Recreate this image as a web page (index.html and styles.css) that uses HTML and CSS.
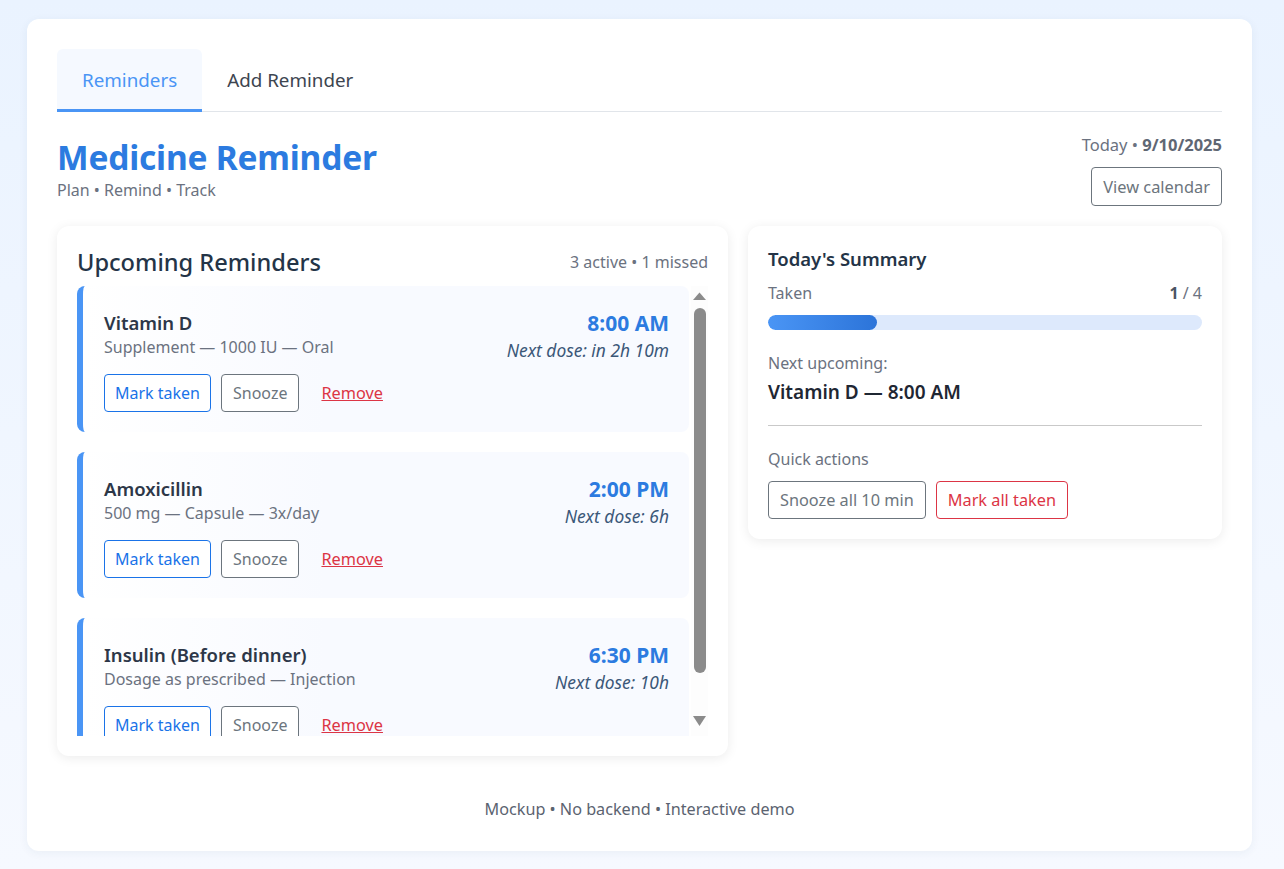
FILE: index.html
```html
<!DOCTYPE html>
<html lang="en">
<head>
<meta charset="utf-8">
<title>Medicine Reminder</title>
<link rel="stylesheet" href="styles.css">
</head>
<body>
<div class="app">
  <nav class="tabs">
    <div class="tab active">Reminders</div>
    <div class="tab">Add Reminder</div>
  </nav>

  <header class="header">
    <div class="brand">
      <h1 class="title">Medicine Reminder</h1>
      <div class="subtitle">Plan • Remind • Track</div>
    </div>
    <div class="header-right">
      <div class="today">Today • <b>9/10/2025</b></div>
      <button class="btn btn-grey btn-cal">View calendar</button>
    </div>
  </header>

  <main class="grid">
    <section class="card card-list">
      <div class="card-head">
        <h2 class="card-title">Upcoming Reminders</h2>
        <div class="muted small">3 active • 1 missed</div>
      </div>
      <div class="list-wrap">
        <div class="list">
          <div class="item">
            <div class="item-main">
              <div class="item-name">Vitamin D</div>
              <div class="item-meta">Supplement — 1000 IU — Oral</div>
              <div class="actions">
                <button class="btn btn-blue">Mark taken</button>
                <button class="btn btn-grey">Snooze</button>
                <a class="link-red" href="#">Remove</a>
              </div>
            </div>
            <div class="item-side">
              <div class="item-time">8:00 AM</div>
              <div class="item-next">Next dose: in 2h 10m</div>
            </div>
          </div>
          <div class="item">
            <div class="item-main">
              <div class="item-name">Amoxicillin</div>
              <div class="item-meta">500 mg — Capsule — 3x/day</div>
              <div class="actions">
                <button class="btn btn-blue">Mark taken</button>
                <button class="btn btn-grey">Snooze</button>
                <a class="link-red" href="#">Remove</a>
              </div>
            </div>
            <div class="item-side">
              <div class="item-time">2:00 PM</div>
              <div class="item-next">Next dose: 6h</div>
            </div>
          </div>
          <div class="item">
            <div class="item-main">
              <div class="item-name">Insulin (Before dinner)</div>
              <div class="item-meta">Dosage as prescribed — Injection</div>
              <div class="actions">
                <button class="btn btn-blue">Mark taken</button>
                <button class="btn btn-grey">Snooze</button>
                <a class="link-red" href="#">Remove</a>
              </div>
            </div>
            <div class="item-side">
              <div class="item-time">6:30 PM</div>
              <div class="item-next">Next dose: 10h</div>
            </div>
          </div>
        </div>
        <div class="scrollbar" aria-hidden="true">
          <svg class="sb-arrow" width="17" height="22" viewBox="0 0 17 22"><polygon points="2,14 15,14 8.5,6.5" fill="#8b8b8b"/></svg>
          <div class="sb-thumb"></div>
          <div class="sb-space"></div>
          <svg class="sb-arrow" width="17" height="15" viewBox="0 0 17 15"><polygon points="2,0 15,0 8.5,10" fill="#8b8b8b"/></svg>
        </div>
      </div>
    </section>

    <aside class="card card-summary">
      <h3 class="sum-title">Today's Summary</h3>
      <div class="row">
        <span class="muted">Taken</span>
        <span class="count"><b>1</b> / 4</span>
      </div>
      <div class="bar"><div class="bar-fill" style="width:25%"></div></div>
      <div class="muted next-label">Next upcoming:</div>
      <div class="next-value">Vitamin D — 8:00 AM</div>
      <hr class="divider">
      <div class="muted">Quick actions</div>
      <div class="quick">
        <button class="btn btn-grey">Snooze all 10 min</button>
        <button class="btn btn-red">Mark all taken</button>
      </div>
    </aside>
  </main>

  <footer class="footer">Mockup • No backend • Interactive demo</footer>
</div>
</body>
</html>
```

FILE: styles.css
```css
* { box-sizing: border-box; }

html, body { height: 100%; }

body {
  margin: 0;
  padding: 19px 32px 18px 27px;
  font-family: "Noto Sans", "Open Sans", sans-serif;
  font-size: 16px;
  line-height: 1.5;
  color: #2d3748;
  background: linear-gradient(180deg, #eaf3ff 0%, #f6f9ff 100%);
}

.app {
  background: #fff;
  border-radius: 12px;
  box-shadow: 0 2px 10px rgba(30, 60, 110, 0.06);
  padding: 30px;
}

/* Tabs */
.tabs {
  display: flex;
  border-bottom: 1px solid #e1e5ea;
}
.tab {
  font-size: 18.8px;
  line-height: 24px;
  padding: 19px 25px 17px;
  color: #3d4550;
  border-bottom: 3px solid transparent;
  margin-bottom: -1px;
  border-radius: 6px 6px 0 0;
}
.tab.active {
  color: #4a95f5;
  background: #f5f9ff;
  border-bottom-color: #4a95f5;
}

/* Header */
.header {
  display: flex;
  justify-content: space-between;
  align-items: flex-start;
  margin-top: 23px;
}
.title {
  margin: 0;
  font-size: 33.5px;
  line-height: 44px;
  font-weight: 700;
  color: #2c7be0;
  letter-spacing: -0.2px;
}
.subtitle {
  font-size: 16px;
  line-height: 22px;
  color: #6b7280;
}
.header-right {
  display: flex;
  flex-direction: column;
  align-items: flex-end;
  margin-top: -1px;
}
.today {
  font-size: 16.5px;
  line-height: 22px;
  color: #6b7280;
}
.today b { color: #5f6774; }

/* Buttons */
.btn {
  font-family: inherit;
  font-size: 16px;
  line-height: 24px;
  padding: 6px 11px;
  background: #fff;
  border: 1px solid #6c757d;
  border-radius: 4px;
  color: #6c757d;
  cursor: pointer;
}
.btn-blue { border-color: #1a73e8; color: #1a73e8; padding: 6px 10px; }
.btn-red { border-color: #dc3545; color: #dc3545; }
.btn-grey { border-color: #6c757d; color: #6c757d; }
.btn-cal {
  margin-top: 11px;
  padding: 7px 11px;
  line-height: 23px;
  font-size: 16.4px;
}

/* Grid */
.grid {
  display: grid;
  grid-template-columns: 671px 1fr;
  gap: 20px;
  align-items: start;
  margin-top: 20px;
}
.card {
  background: #fff;
  border-radius: 12px;
  box-shadow: 0 2px 12px rgba(0, 0, 0, 0.08);
  padding: 20px;
}

.card-head {
  display: flex;
  justify-content: space-between;
  align-items: center;
  margin-bottom: 8px;
}
.card-title {
  margin: 0;
  font-size: 23.6px;
  line-height: 32px;
  font-weight: 500;
  color: #243447;
}
.muted { color: #6b7280; }
.small { font-size: 16px; }

.list-wrap {
  display: flex;
  gap: 2px;
  height: 450px;
}
.list {
  flex: 1;
  min-width: 0;
  overflow: hidden;
  display: flex;
  flex-direction: column;
  gap: 20px;
}
.scrollbar {
  flex: none;
  width: 17px;
  display: flex;
  flex-direction: column;
  align-items: center;
  background: #fdfdfd;
  padding-bottom: 5px;
}
.sb-arrow { display: block; flex: none; }
.sb-thumb {
  flex: none;
  width: 12px;
  height: 365px;
  border-radius: 6px;
  background: #8b8b8b;
}
.sb-space { flex: 1; }

.item {
  flex: none;
  display: flex;
  justify-content: space-between;
  border-left: 6px solid #4a95f5;
  border-radius: 8px;
  background: linear-gradient(90deg, #ffffff 0%, #f8faff 40%, #f8faff 100%);
  padding: 24px 20px 20px 21px;
}
.item-name {
  font-size: 18.5px;
  line-height: 25px;
  font-weight: 600;
  color: #2d3748;
}
.item-meta {
  font-size: 16px;
  line-height: 24px;
  color: #6b7280;
}
.actions {
  display: flex;
  align-items: center;
  gap: 10px;
  margin-top: 15px;
}
.link-red {
  color: #dc3545;
  text-decoration: underline;
  margin-left: 12px;
  font-size: 16.3px;
}
.item-side { text-align: right; }
.item-time {
  font-size: 21px;
  line-height: 26px;
  font-weight: 700;
  color: #2c7be0;
}
.item-next {
  font-style: italic;
  font-size: 17.4px;
  line-height: 28px;
  color: #3b5778;
}

/* Summary */
.sum-title {
  margin: 0;
  font-size: 18.5px;
  line-height: 26px;
  font-weight: 600;
  color: #243447;
}
.row {
  display: flex;
  justify-content: space-between;
  margin-top: 10px;
  font-size: 16px;
  line-height: 22px;
}
.count { color: #6b7280; }
.count b { color: #4b5563; }
.bar {
  margin-top: 11px;
  height: 15px;
  border-radius: 8px;
  background: #dde9fc;
  overflow: hidden;
}
.bar-fill {
  height: 100%;
  border-radius: 8px;
  background: linear-gradient(90deg, #4a95f5, #2c74d9);
}
.next-label { margin-top: 21px; line-height: 24px; }
.next-value {
  margin-top: 4px;
  font-size: 19px;
  line-height: 26px;
  font-weight: 600;
  color: #1f2733;
}
.divider {
  border: 0;
  border-top: 1px solid #c9c9c9;
  margin: 20px 0 21px;
}
.quick {
  display: flex;
  gap: 10px;
  margin-top: 10px;
}
.quick .btn { font-size: 16.3px; }

.footer {
  text-align: center;
  margin-top: 41px;
  color: #5b6370;
  font-size: 16.2px;
  line-height: 24px;
}
```
